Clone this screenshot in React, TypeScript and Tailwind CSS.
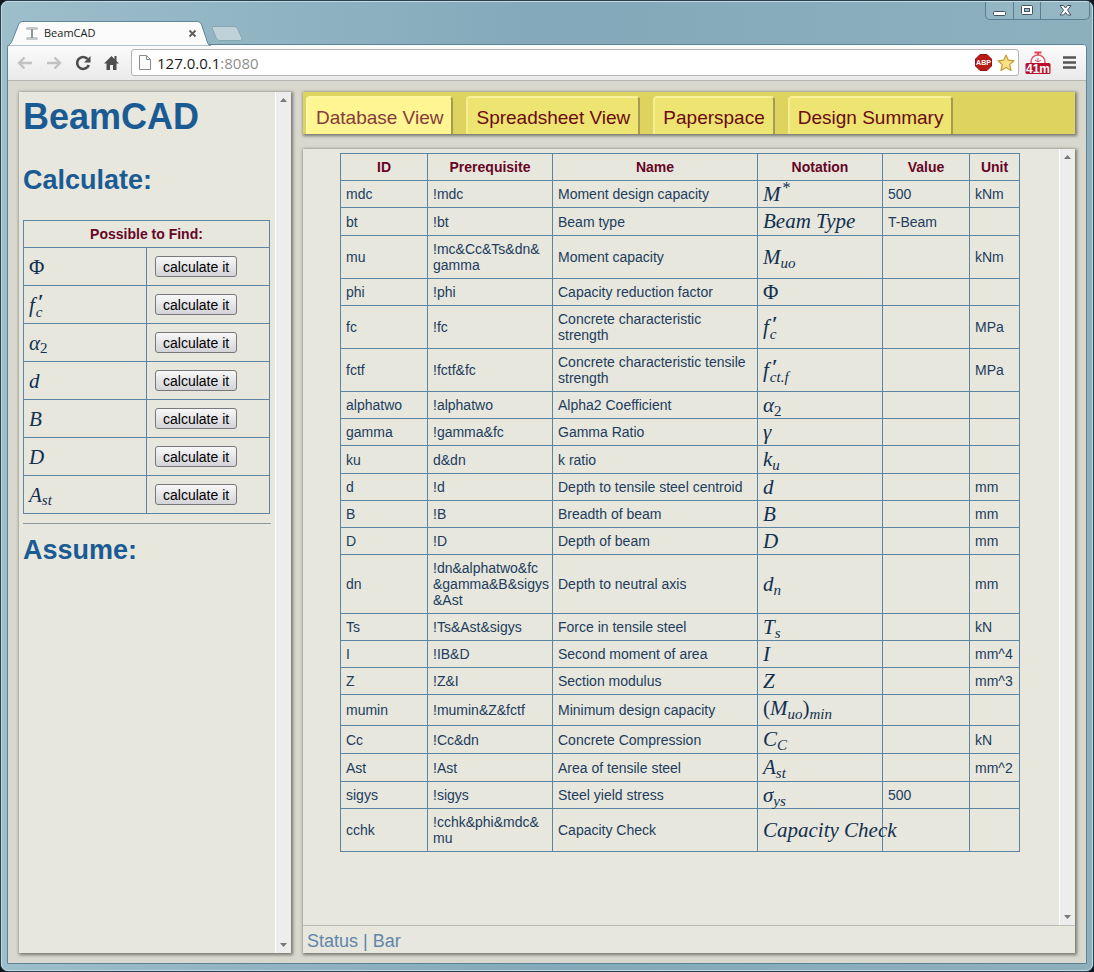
import { Fragment, type ReactNode } from "react";

function MathText({ children, className = "h-4" }: { children: ReactNode; className?: string }) {
  return (
    <span
      className={`block whitespace-nowrap font-['Liberation_Serif',serif] text-[21px] leading-4 text-[#12304f] ${className}`}
    >
      {children}
    </span>
  );
}

function Sub({ children }: { children: ReactNode }) {
  return <sub className="text-[15px] leading-[0] italic">{children}</sub>;
}

function PrimeSub({ children }: { children: ReactNode }) {
  return (
    <span className="inline-grid align-middle text-[15px] leading-[10px] italic">
      <span className="pl-[3px] text-[20px] font-bold">′</span>
      <span className="pl-px">{children}</span>
    </span>
  );
}

const phi = <>Φ</>;
const fc = (
  <>
    <i>f</i>
    <PrimeSub>c</PrimeSub>
  </>
);
const alpha2 = (
  <>
    <i>α</i>
    <sub className="text-[15px] leading-[0]">2</sub>
  </>
);
const ast = (
  <>
    <i>A</i>
    <Sub>st</Sub>
  </>
);

type Row = {
  id: string;
  pre: string[];
  name: string;
  notation: ReactNode;
  value?: string;
  unit?: string;
  size?: string;
};

const rows: Row[] = [
  { id: "mdc", pre: ["!mdc"], name: "Moment design capacity", notation: <><i>M</i><sup className="pl-0.5 text-[16px] leading-[0]">*</sup></>, value: "500", unit: "kNm" },
  { id: "bt", pre: ["!bt"], name: "Beam type", notation: <i>Beam Type</i>, value: "T-Beam", size: "h-[17px]" },
  { id: "mu", pre: ["!mc&Cc&Ts&dn&", "gamma"], name: "Moment capacity", notation: <><i>M</i><Sub>uo</Sub></>, unit: "kNm" },
  { id: "phi", pre: ["!phi"], name: "Capacity reduction factor", notation: phi },
  { id: "fc", pre: ["!fc"], name: "Concrete characteristic strength", notation: fc, unit: "MPa" },
  { id: "fctf", pre: ["!fctf&fc"], name: "Concrete characteristic tensile strength", notation: <><i>f</i><PrimeSub>ct.f</PrimeSub></>, unit: "MPa" },
  { id: "alphatwo", pre: ["!alphatwo"], name: "Alpha2 Coefficient", notation: alpha2 },
  { id: "gamma", pre: ["!gamma&fc"], name: "Gamma Ratio", notation: <i>γ</i> },
  { id: "ku", pre: ["d&dn"], name: "k ratio", notation: <><i>k</i><Sub>u</Sub></>, size: "h-[17px]" },
  { id: "d", pre: ["!d"], name: "Depth to tensile steel centroid", notation: <i>d</i>, unit: "mm" },
  { id: "B", pre: ["!B"], name: "Breadth of beam", notation: <i>B</i>, unit: "mm" },
  { id: "D", pre: ["!D"], name: "Depth of beam", notation: <i>D</i>, unit: "mm" },
  { id: "dn", pre: ["!dn&alphatwo&fc", "&gamma&B&sigys", "&Ast"], name: "Depth to neutral axis", notation: <><i>d</i><Sub>n</Sub></>, unit: "mm" },
  { id: "Ts", pre: ["!Ts&Ast&sigys"], name: "Force in tensile steel", notation: <><i>T</i><Sub>s</Sub></>, unit: "kN" },
  { id: "I", pre: ["!IB&D"], name: "Second moment of area", notation: <i>I</i>, unit: "mm^4" },
  { id: "Z", pre: ["!Z&I"], name: "Section modulus", notation: <i>Z</i>, unit: "mm^3" },
  { id: "mumin", pre: ["!mumin&Z&fctf"], name: "Minimum design capacity", notation: <>(<i>M</i><Sub>uo</Sub>)<Sub>min</Sub></>, size: "h-5" },
  { id: "Cc", pre: ["!Cc&dn"], name: "Concrete Compression", notation: <><i>C</i><Sub>C</Sub></>, unit: "kN", size: "h-[17px]" },
  { id: "Ast", pre: ["!Ast"], name: "Area of tensile steel", notation: ast, unit: "mm^2", size: "h-[17px]" },
  { id: "sigys", pre: ["!sigys"], name: "Steel yield stress", notation: <><i>σ</i><Sub>ys</Sub></>, value: "500" },
  { id: "cchk", pre: ["!cchk&phi&mdc&", "mu"], name: "Capacity Check", notation: <i>Capacity Check</i> },
];

const findable: { id: string; symbol: ReactNode }[] = [
  { id: "phi", symbol: phi },
  { id: "fc", symbol: fc },
  { id: "alphatwo", symbol: alpha2 },
  { id: "d", symbol: <i>d</i> },
  { id: "B", symbol: <i>B</i> },
  { id: "D", symbol: <i>D</i> },
  { id: "Ast", symbol: ast },
];

const tabs = ["Database View", "Spreadsheet View", "Paperspace", "Design Summary"];

function ScrollTrack() {
  return (
    <div className="flex w-4 shrink-0 flex-col items-center justify-between border-l border-white bg-[#ededee]">
      <button aria-label="Scroll up" className="flex h-4 w-4 items-center justify-center">
        <svg width="7" height="4" viewBox="0 0 7 4"><path d="M0 4 3.500 0 7 4z" fill="#77777c" /></svg>
      </button>
      <button aria-label="Scroll down" className="flex h-4 w-4 items-center justify-center">
        <svg width="7" height="4" viewBox="0 0 7 4"><path d="M0 0h7L3.500 4z" fill="#77777c" /></svg>
      </button>
    </div>
  );
}

function WindowButtons() {
  return (
    <div className="-mr-[3px] flex h-[18px] divide-x divide-[#587f91] rounded-b-[5px] border-x border-b border-[#587f91] bg-[#9dbdca]/50">
      <button aria-label="Minimize" className="flex w-7 items-center justify-center">
        <svg width="13" height="12" viewBox="0 0 13 12"><rect x="0.500" y="6.500" width="12" height="4" rx="1" fill="#fff" stroke="#44525e" /></svg>
      </button>
      <button aria-label="Maximize" className="flex w-[27px] items-center justify-center">
        <svg width="12" height="11" viewBox="0 0 12 11">
          <rect x="0.500" y="0.500" width="11" height="9" rx="1" fill="#fff" stroke="#44525e" />
          <rect x="3.500" y="3.500" width="5" height="3" fill="#9dbdca" stroke="#44525e" />
        </svg>
      </button>
      <button aria-label="Close window" className="flex w-12 items-center justify-center">
        <svg width="13" height="11" viewBox="0 0 13 11">
          <path d="M1 .5h3.500L6.500 3 8.500.5H12L8.500 5.200 12 10H8.500l-2-2.500-2 2.500H1l3.500-4.800z" fill="#fff" stroke="#44525e" />
        </svg>
      </button>
    </div>
  );
}

function TabStrip() {
  return (
    <div className="flex h-[43px] justify-between">
      <div className="flex items-end">
        <div className="relative flex h-6 w-[204px] items-center pr-[14px] pl-[18px]">
          <svg className="absolute inset-0" width="206" height="25" viewBox="0 0 206 25">
            <path d="M0 25c3-1 4-3 5-5l6-15c1-3 2-4.500 5-4.500h174c3 0 4 1.500 5 4.500l5 15c1 3 2 5 4 5z" fill="#fbfbfb" stroke="#61879a" />
          </svg>
          <svg className="relative ml-px shrink-0" width="12" height="13" viewBox="0 0 12 13">
            <path d="M.5.500h11v2H7v8h4.500v2H.5v-2H5v-8H.5z" fill="#8d9698" />
            <path d="M1 1.500h10M1 11.500h10" stroke="#c5cccd" />
          </svg>
          <span className="relative ml-[6px] flex-1 font-['Open_Sans',sans-serif] text-[11px] text-[#1b1b1b]">BeamCAD</span>
          <button aria-label="Close tab" className="relative">
            <svg width="9" height="9" viewBox="0 0 9 9"><path d="m1.500 1.500 6 6m0-6-6 6" stroke="#5c5c5c" strokeWidth="1.800" /></svg>
          </button>
        </div>
        <button aria-label="New tab" className="mb-1">
          <svg width="32" height="15" viewBox="0 0 32 15">
            <path d="M2 .5h21c2 0 3 1 4 3l3.500 8c1 2 0 3-2 3H9c-2 0-3-1-4-3L1.500 3C1 1.500 1 .500 2 .500z" fill="#bfd1d9" stroke="#84a5b4" />
          </svg>
        </button>
      </div>
      <WindowButtons />
    </div>
  );
}

function Toolbar() {
  return (
    <div className="flex h-9 items-center rounded-t-[3px] border-b border-[#b5b5b1] bg-gradient-to-b from-[#fbfbfb] to-[#eaeaea] pr-[10px] pl-[9px]">
      <button aria-label="Back" className="mr-[13px]">
        <svg width="16" height="14" viewBox="0 0 16 14"><path d="M7.500 1.500 2 7l5.500 5.500M2.500 7H15" fill="none" stroke="#c2c2c2" strokeWidth="2.400" /></svg>
      </button>
      <button aria-label="Forward" className="mr-[13px]">
        <svg width="16" height="14" viewBox="0 0 16 14"><path d="M8.500 1.500 14 7l-5.500 5.500M13.500 7H1" fill="none" stroke="#c2c2c2" strokeWidth="2.400" /></svg>
      </button>
      <button aria-label="Reload" className="mr-[13px]">
        <svg width="16" height="16" viewBox="0 0 16 16">
          <path d="M12.700 4A6 6 0 1 0 13.800 10" fill="none" stroke="#4e4e4e" strokeWidth="2.600" />
          <path d="M15.500 1v6.500H9z" fill="#4e4e4e" />
        </svg>
      </button>
      <button aria-label="Home" className="mr-3">
        <svg width="15" height="15" viewBox="0 0 15 15">
          <path d="M7.500 1 0 8.500h2.500V15H6v-5h3v5h3.500V8.500H15L12.500 6V1h-2v3z" fill="#4e4e4e" />
        </svg>
      </button>
      <div className="flex h-[27px] flex-1 items-center rounded-[3px] border border-[#b4b4b4] bg-white pr-[3px] pl-[7px]">
        <svg className="shrink-0" width="12" height="15" viewBox="0 0 12 15">
          <path d="M.5.500h7l4 4v10H.5zM7.500.500v4h4" fill="#fafafa" stroke="#8a8a8a" />
        </svg>
        <p className="ml-[6px] flex-1 font-['Open_Sans',sans-serif] text-[15px] leading-5 text-[#1b1b1b]">
          127.0.0.1<span className="text-[#8f8f8f]">:8080</span>
        </p>
        <button aria-label="Adblock" className="mr-[5px]">
          <svg width="17" height="17" viewBox="0 0 17 17">
            <path d="M5 .5h7L16.500 5v7L12 16.500H5L.5 12V5z" fill="#b91c17" stroke="#8e1713" />
            <text x="8.500" y="11" textAnchor="middle" fontFamily="Liberation Sans, sans-serif" fontWeight="700" fontSize="7" fill="#fff">ABP</text>
          </svg>
        </button>
        <button aria-label="Bookmark">
          <svg width="18" height="18" viewBox="0 0 18 18">
            <path d="m9 1 2.300 5.200 5.700.6-4.300 3.800L14 16.500 9 13.500l-5 3 1.300-5.900L1 6.800l5.700-.6z" fill="#fbe183" stroke="#c29a3c" strokeWidth="1.200" strokeLinejoin="round" />
          </svg>
        </button>
      </div>
      <button aria-label="Timer, 41m" className="mx-[6px]">
        <svg width="26" height="24" viewBox="0 0 26 24">
          <path d="M9.500 1.500h7M13 2v3" stroke="#e0455a" strokeWidth="2" />
          <circle cx="13" cy="11" r="7" fill="#fff" stroke="#dd5868" strokeWidth="1.500" />
          <path d="M13 7v4l-3-2m3 2 3-2" stroke="#d0475b" fill="none" />
          <rect x=".5" y="12" width="25" height="11" rx="1.500" fill="#b90f2c" />
          <text x="13" y="21.500" textAnchor="middle" fontFamily="Liberation Sans, sans-serif" fontWeight="700" fontSize="12" fill="#fff">41m</text>
        </svg>
      </button>
      <button aria-label="Menu" className="ml-[6px]">
        <svg width="13" height="13" viewBox="0 0 13 13"><path d="M0 1.500h13M0 6.500h13M0 11.500h13" stroke="#555" strokeWidth="2.600" /></svg>
      </button>
    </div>
  );
}

function Sidebar() {
  return (
    <aside className="flex w-[272px] shrink-0 bg-[#e7e7de] shadow-[1px_1px_3px_1px_#77776f]">
      <div className="min-w-0 flex-1 p-1 text-[#1b5b93]">
        <h1 className="text-[36px] leading-[42px] font-bold">BeamCAD</h1>
        <h2 className="mt-[26px] text-[27px] leading-8 font-bold">Calculate:</h2>
        <table className="mt-6 w-[247px] table-fixed border-collapse text-sm leading-4">
          <thead>
            <tr>
              <th colSpan={2} className="border border-[#5c84a3] p-[5px] text-[#670525]">Possible to Find:</th>
            </tr>
          </thead>
          <tbody>
            {findable.map((item) => (
              <tr key={item.id}>
                <td className="border border-[#5c84a3] p-[5px]">
                  <MathText>{item.symbol}</MathText>
                </td>
                <td className="border border-[#5c84a3] px-2 py-2">
                  <button className="block h-[21px] rounded-[3px] border border-[#77777c] bg-gradient-to-b from-[#f8f8f8] to-[#d4d3d8] px-[7px] text-sm leading-4 text-black">
                    calculate it
                  </button>
                </td>
              </tr>
            ))}
          </tbody>
        </table>
        <hr className="mt-[9px] border-[#8f9ba2]" />
        <h2 className="mt-[10px] text-[27px] leading-8 font-bold">Assume:</h2>
      </div>
      <ScrollTrack />
    </aside>
  );
}

function DatabaseTable() {
  const cell = "border border-[#5c84a3] p-[5px]";
  return (
    <table className="mx-auto w-[90%] table-fixed border-collapse text-sm leading-4 text-[#223c5c]">
      <colgroup>
        <col className="w-[87px]" />
        <col className="w-[125px]" />
        <col className="w-[205px]" />
        <col className="w-[125px]" />
        <col className="w-[87px]" />
        <col className="w-[50px]" />
      </colgroup>
      <thead>
        <tr className="text-[#670525]">
          {["ID", "Prerequisite", "Name", "Notation", "Value", "Unit"].map((h) => (
            <th key={h} className={cell}>{h}</th>
          ))}
        </tr>
      </thead>
      <tbody>
        {rows.map((r) => (
          <tr key={r.id}>
            <td className={cell}>{r.id}</td>
            <td className={`${cell} whitespace-nowrap`}>
              {r.pre.map((line, i) => (
                <Fragment key={line}>
                  {i > 0 && <br />}
                  {line}
                </Fragment>
              ))}
            </td>
            <td className={cell}>{r.name}</td>
            <td className={cell}>
              <MathText className={r.size}>{r.notation}</MathText>
            </td>
            <td className={cell}>{r.value}</td>
            <td className={`${cell} whitespace-nowrap`}>{r.unit}</td>
          </tr>
        ))}
      </tbody>
    </table>
  );
}

export default function App() {
  return (
    <div className="flex min-h-screen bg-[#10151b] font-['Liberation_Sans',Arial,sans-serif]">
      <div className="flex flex-1 flex-col rounded-lg border border-[#2c4150] bg-gradient-to-r from-[#9dbecb] via-[#83a9ba] to-[#8db0bd]">
        <div className="flex flex-1 flex-col rounded-[7px] border border-[#c3d9e2] px-[5px] pb-[6px]">
          <TabStrip />
          <div className="-mt-px flex flex-1 flex-col rounded-t-[4px] border border-[#5d8294] bg-[#d8d8ce]">
            <Toolbar />
            <div className="flex flex-1 gap-3 px-[11px] pt-[11px] pb-[10px]">
              <Sidebar />
              <main className="flex min-w-0 flex-1 flex-col">
                <nav className="flex h-[42px] gap-[13px] bg-[#dfd360] pt-1 pl-[3px] shadow-[1px_1px_3px_1px_#77776f]">
                  {tabs.map((t, i) => (
                    <button
                      key={t}
                      className={`rounded-t-[4px] border-t-2 border-r-2 border-l-2 px-2 pt-[3px] text-[19px] leading-[33px] whitespace-nowrap ${
                        i === 0
                          ? "border-t-[#fff6a0] border-r-[#a59b55] border-l-[#fff9ae] bg-[#fff592] text-[#853c3c]"
                          : "border-t-[#f8f09a] border-r-[#a59b55] border-l-[#f5ed92] bg-[#ede471] text-[#6a0b12]"
                      }`}
                    >
                      {t}
                    </button>
                  ))}
                </nav>
                <section className="mt-[15px] flex flex-1 flex-col bg-[#e7e7de] shadow-[1px_1px_3px_1px_#77776f]">
                  <div className="flex flex-1">
                    <div className="min-w-0 flex-1 pt-1 pr-0.5">
                      <DatabaseTable />
                    </div>
                    <ScrollTrack />
                  </div>
                  <footer className="border-t border-[#bcbcb6] px-1 pt-[5px] pb-0.5 text-lg leading-5 text-[#5f86ab]">Status | Bar</footer>
                </section>
              </main>
            </div>
          </div>
        </div>
      </div>
    </div>
  );
}
